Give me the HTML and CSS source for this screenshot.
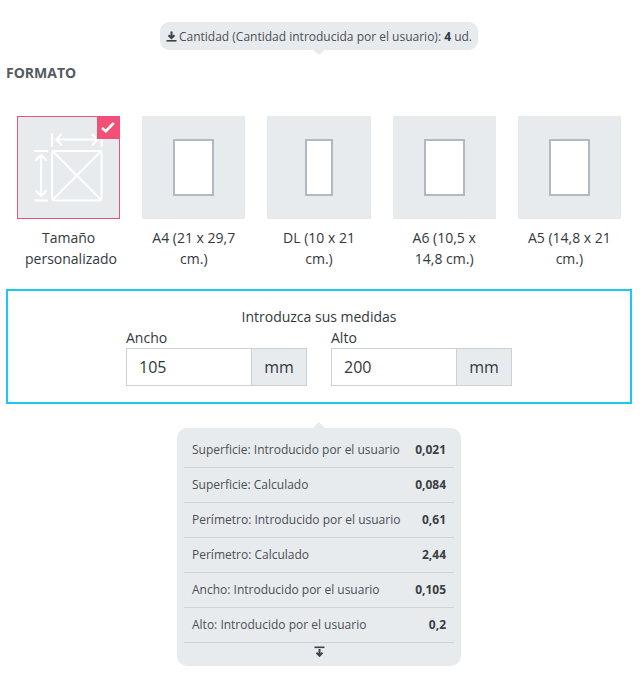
FILE: index.html
```html
<!DOCTYPE html>
<html lang="es">
<head>
<meta charset="utf-8">
<title>Formato</title>
<link rel="stylesheet" href="styles.css">
</head>
<body>
<main class="page">
  <div class="qty-wrap">
    <div class="tip tip-down">
      <svg class="dl-icon" viewBox="0 0 11 11" width="11" height="11"><path d="M5.5 0.5V7M2.5 4.2L5.5 7.2L8.5 4.2" fill="none" stroke="#3d4248" stroke-width="2"/><rect x="0.5" y="9" width="10" height="1.6" fill="#3d4248"/></svg>
      <span>Cantidad (Cantidad introducida por el usuario): <b>4</b> ud.</span>
    </div>
  </div>
  <h2 class="heading">FORMATO</h2>
  <div class="formats">
    <div class="format">
      <div class="tile tile-selected">
        <svg class="custom-icon" viewBox="18 117 101 101">
          <g fill="none" stroke="#fff" stroke-width="2" stroke-linecap="round" stroke-linejoin="round">
            <rect x="52" y="151" width="49.5" height="49.5" rx="3"/>
            <path d="M52.5 151L101 200M101 151L52.5 200"/>
            <path d="M52 134V146M101.5 134V146M56 139.5H97.5M61 134.5L56 139.5L61 144.5M92.5 134.5L97.5 139.5L92.5 144.5"/>
            <path d="M35 151H47M35 200.5H47M41 155V196M36 160L41 155L46 160M36 191L41 196L46 191"/>
          </g>
        </svg>
        <span class="badge">
          <svg viewBox="0 0 22 22" width="22" height="22"><path d="M5 12L8.8 15.2L16.8 7" fill="none" stroke="#fff" stroke-width="2.6"/></svg>
        </span>
      </div>
      <p class="label">Tamaño personalizado</p>
    </div>
    <div class="format">
      <div class="tile"><div class="sheet"></div></div>
      <p class="label">A4 (21 x 29,7 cm.)</p>
    </div>
    <div class="format">
      <div class="tile"><div class="sheet sheet-narrow"></div></div>
      <p class="label">DL (10 x 21 cm.)</p>
    </div>
    <div class="format">
      <div class="tile"><div class="sheet"></div></div>
      <p class="label">A6 (10,5 x 14,8 cm.)</p>
    </div>
    <div class="format">
      <div class="tile"><div class="sheet"></div></div>
      <p class="label">A5 (14,8 x 21 cm.)</p>
    </div>
  </div>
  <section class="measures">
    <div class="measures-title">Introduzca sus medidas</div>
    <div class="fields">
      <div class="field">
        <label class="field-label" for="w">Ancho</label>
        <div class="group"><input id="w" class="input" value="105"><span class="addon">mm</span></div>
      </div>
      <div class="field">
        <label class="field-label" for="h">Alto</label>
        <div class="group"><input id="h" class="input" value="200"><span class="addon">mm</span></div>
      </div>
    </div>
  </section>
  <div class="calc-wrap">
    <div class="tip-up calc">
      <div class="row"><span>Superficie: Introducido por el usuario</span><b>0,021</b></div>
      <div class="row"><span>Superficie: Calculado</span><b>0,084</b></div>
      <div class="row"><span>Perímetro: Introducido por el usuario</span><b>0,61</b></div>
      <div class="row"><span>Perímetro: Calculado</span><b>2,44</b></div>
      <div class="row"><span>Ancho: Introducido por el usuario</span><b>0,105</b></div>
      <div class="row"><span>Alto: Introducido por el usuario</span><b>0,2</b></div>
      <div class="more">
        <svg viewBox="0 0 11 11" width="11" height="11"><rect x="0.5" y="0.5" width="10" height="1.6" fill="#3d4248"/><path d="M5.5 3V10M2.5 6.6L5.5 9.8L8.5 6.6" fill="none" stroke="#3d4248" stroke-width="2"/></svg>
      </div>
    </div>
  </div>
</main>
</body>
</html>
```
FILE: styles.css
```css
* { box-sizing: border-box; }
html, body { margin: 0; background: #fff; }
body {
  font-family: "Open Sans", "Liberation Sans", sans-serif;
  font-size: 14px;
  color: #3a3f45;
}
.page { width: 643px; padding: 22px 11px 0 6px; }
.qty-wrap { display: flex; justify-content: center; }
.tip {
  position: relative;
  display: flex;
  align-items: center;
  gap: 2px;
  height: 28px;
  padding: 0 6px;
  background: #e8ebee;
  border-radius: 9px;
  font-size: 12px;
  color: #4a4f55;
  white-space: nowrap;
}
.tip b { color: #33383e; }
.tip-down::after {
  content: "";
  position: absolute;
  left: 50%;
  bottom: -5px;
  margin-left: -6px;
  border-left: 6px solid transparent;
  border-right: 6px solid transparent;
  border-top: 5px solid #e8ebee;
}
.dl-icon { flex: none; }
.heading {
  margin: 14px 0 0;
  font-size: 14px;
  line-height: 18px;
  font-weight: 700;
  color: #555a60;
}
.formats {
  display: grid;
  grid-template-columns: repeat(5, minmax(0, 1fr));
  margin-top: 34px;
}
.format { padding: 0 11px; text-align: center; }
.tile {
  position: relative;
  height: 103px;
  display: flex;
  align-items: center;
  justify-content: center;
  background: #e8ebee;
}
.tile-selected { border: 1px solid #e4557a; }
.custom-icon { display: block; width: 100%; height: 100%; }
.badge {
  position: absolute;
  top: -1px;
  right: -1px;
  width: 23px;
  height: 23px;
  background: #f25076;
}
.badge svg { display: block; }
.sheet {
  width: 41px;
  height: 57px;
  background: #fff;
  border: 2px solid #b1b8bf;
}
.sheet-narrow { width: 28px; }
.label {
  margin: 8px 8px 0;
  font-size: 14px;
  line-height: 21px;
  color: #33383e;
}
.measures {
  height: 115px;
  margin-top: 20px;
  padding-top: 16px;
  border: 2px solid #1cc9ee;
  text-align: center;
}
.measures-title { line-height: 20px; color: #33383e; }
.fields { display: flex; justify-content: center; gap: 24px; }
.field { width: 181px; text-align: left; }
.field-label { display: block; line-height: 21px; color: #33383e; }
.group { display: flex; height: 38px; }
.input {
  flex: 1;
  min-width: 0;
  padding: 0 12px;
  border: 1px solid #ccd1d8;
  border-right: 0;
  background: #fff;
  font: 16px "Open Sans", sans-serif;
  color: #33383e;
}
.addon {
  flex: none;
  width: 56px;
  display: flex;
  align-items: center;
  justify-content: center;
  border: 1px solid #ccd1d8;
  background: #e8ebee;
  font-size: 16px;
  color: #33383e;
}
.calc-wrap { display: flex; justify-content: center; margin-top: 24px; }
.calc {
  position: relative;
  width: 284px;
  height: 238px;
  padding: 5px 7px 0;
  background: #e8ebee;
  border-radius: 10px;
  font-size: 12px;
  color: #4a4f55;
}
.tip-up::before {
  content: "";
  position: absolute;
  left: 50%;
  top: -6px;
  margin-left: -6px;
  border-left: 6px solid transparent;
  border-right: 6px solid transparent;
  border-bottom: 6px solid #e8ebee;
}
.row {
  display: flex;
  align-items: center;
  justify-content: space-between;
  height: 35px;
  padding: 0 8px 2px;
  border-bottom: 1px solid #cfd3d8;
  white-space: nowrap;
}
.row b { color: #3a3f45; }
.more { display: flex; justify-content: center; padding-top: 3px; }
.more svg { display: block; }
```
